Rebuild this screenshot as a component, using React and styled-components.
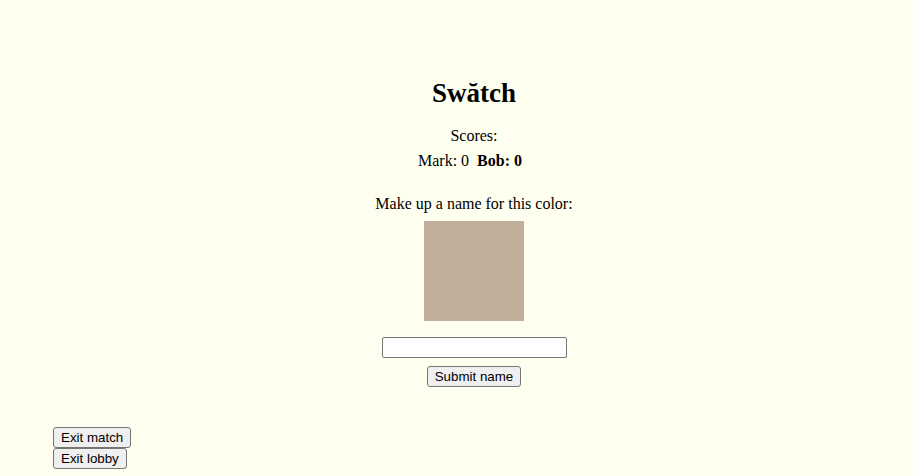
import React from "react";
import styled, { createGlobalStyle } from "styled-components";

const GlobalStyle = createGlobalStyle`
  body {
    margin: 0;
    background: #fffff0;
    color: #000;
    font-family: "Liberation Serif", "Times New Roman", serif;
    font-size: 16px;
  }
`;

const Page = styled.div`
  padding: 78px 18px 0 53px;
`;

const Game = styled.main`
  display: flex;
  flex-direction: column;
  align-items: center;
  text-align: center;
`;

const Title = styled.h1`
  margin: 0;
  font-size: 27px;
  line-height: 31px;
  font-weight: bold;
`;

const Scores = styled.section`
  margin-top: 18px;
  line-height: 18px;
`;

const ScoreLine = styled.div`
  margin-top: ${({ gap }) => gap || 0}px;
`;

const Player = styled.span`
  font-weight: ${({ current }) => (current ? "bold" : "normal")};
  margin-right: 8px;
`;

const Prompt = styled.p`
  margin: 25px 0 0;
  line-height: 18px;
`;

const Swatch = styled.div`
  width: 100px;
  height: 100px;
  margin-top: 8px;
  background: ${({ color }) => color};
`;

const NameForm = styled.form`
  display: flex;
  flex-direction: column;
  align-items: center;
  margin-top: 16px;
`;

const NameInput = styled.input`
  box-sizing: border-box;
  width: 185px;
  height: 21px;
  margin: 0;
  background: #fff;
  border: 1px solid #767676;
  border-radius: 2px;
`;

const Button = styled.button`
  box-sizing: border-box;
  height: 21px;
  margin: ${({ spaced }) => (spaced ? "8px 0 0" : "0")};
  padding: 1px 7px;
  font-family: "Liberation Sans", Arial, sans-serif;
  font-size: 13.333px;
  color: #000;
  background: #efefef;
  border: 1px solid #767676;
  border-radius: 3px;
`;

const Controls = styled.nav`
  display: flex;
  flex-direction: column;
  align-items: flex-start;
  margin-top: 40px;
`;

export default function App() {
  const players = [
    { name: "Mark", score: 0, current: false },
    { name: "Bob", score: 0, current: true },
  ];

  return (
    <Page>
      <GlobalStyle />
      <Game>
        <Title>Swătch</Title>
        <Scores>
          <ScoreLine>Scores:</ScoreLine>
          <ScoreLine gap={7}>
            {players.map((p) => (
              <Player key={p.name} current={p.current}>
                {p.name}: {p.score}
              </Player>
            ))}
          </ScoreLine>
        </Scores>
        <Prompt>Make up a name for this color:</Prompt>
        <Swatch color="#c0af9a" />
        <NameForm onSubmit={(e) => e.preventDefault()}>
          <NameInput type="text" />
          <Button spaced type="submit">Submit name</Button>
        </NameForm>
      </Game>
      <Controls>
        <Button>Exit match</Button>
        <Button>Exit lobby</Button>
      </Controls>
    </Page>
  );
}
